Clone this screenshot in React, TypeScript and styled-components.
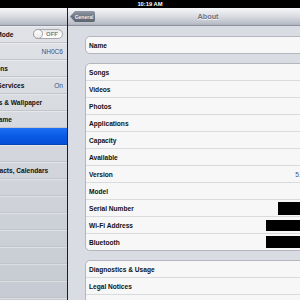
import * as React from 'react'
import styled, { createGlobalStyle } from 'styled-components'

const GlobalStyle = createGlobalStyle`
  html, body {
    margin: 0;
    padding: 0;
    background: #000;
  }
  body {
    font-family: "Liberation Sans", Arial, Helvetica, sans-serif;
  }
`

const Screen = styled.div`
  width: 300px;
  height: 300px;
  overflow: hidden;
  display: flex;
  flex-direction: column;
  background: #d9dce2;
`

const StatusBar = styled.div`
  flex: none;
  height: 8px;
  background: #000;
  color: #fff;
  font-size: 5.8px;
  font-weight: 700;
  line-height: 8px;
  text-align: center;
`

const Split = styled.div`
  flex: 1;
  min-height: 0;
  display: flex;
`

const Master = styled.div`
  flex: none;
  width: 67px;
  overflow: hidden;
  border-right: 1px solid #1e1f23;
  background: linear-gradient(#e2e4e8, #d3d6dc 50%, #c6cad2);
`

// the pane is wider than what shows: only its right edge is on screen
const MasterInner = styled.div`
  width: 217px;
  margin-left: -150px;
`

const Bar = styled.div`
  height: 17px;
  border-bottom: 1px solid #8d919d;
  background: linear-gradient(#f6f7f9, #dcdee3 45%, #bfc3cc 85%, #b0b4bf);
  display: grid;
  grid-template-columns: 1fr auto 1fr;
  align-items: center;
`

const BarTitle = styled.div`
  grid-column: 2;
  font-size: 7.3px;
  font-weight: 700;
  color: #6c7280;
  text-shadow: 0 1px 0 rgba(255, 255, 255, 0.8);
`

const BackButton = styled.div`
  grid-column: 1;
  justify-self: start;
  margin-left: 2px;
  width: 25px;
  height: 11px;
  box-sizing: border-box;
  padding: 0 2px 0 5px;
  display: flex;
  align-items: center;
  justify-content: center;
  font-size: 5px;
  font-weight: 700;
  color: #fff;
  text-shadow: 0 -0.5px 0 rgba(0, 0, 0, 0.5);
  background: linear-gradient(#9399a5, #6b7280 55%, #5d6472);
  border-radius: 2px;
  clip-path: polygon(0 50%, 5px 0, 100% 0, 100% 100%, 5px 100%);
`

const MasterRow = styled.div<{ selected?: boolean }>`
  height: 16px;
  border-bottom: 1px solid ${(p) => (p.selected ? '#0646b8' : '#c2c5cc')};
  box-shadow: inset 0 1px 0 rgba(255, 255, 255, ${(p) => (p.selected ? 0 : 0.35)});
  padding: 0 4px 0 118px;
  display: flex;
  align-items: center;
  justify-content: space-between;
  white-space: nowrap;
  font-size: 6.6px;
  font-weight: 700;
  color: ${(p) => (p.selected ? '#fff' : '#111')};
  background: ${(p) => (p.selected ? 'linear-gradient(#1d6ff2, #0a5ae6 50%, #0750d6)' : 'transparent')};
`

const MasterValue = styled.span`
  font-weight: 400;
  color: #385487;
`

const Switch = styled.div`
  position: relative;
  width: 30px;
  height: 10px;
  box-sizing: border-box;
  border: 1px solid #a6a8ae;
  border-radius: 5px;
  background: linear-gradient(#e6e6e6, #fdfdfd 60%);
  display: flex;
  align-items: center;
  justify-content: flex-end;
  padding-right: 4px;
  font-size: 6px;
  font-weight: 700;
  color: #7d7d7d;
`

const Knob = styled.div`
  position: absolute;
  left: -1px;
  top: -1px;
  width: 10px;
  height: 10px;
  box-sizing: border-box;
  border-radius: 50%;
  border: 1px solid #a3a5ab;
  background: linear-gradient(#ffffff, #e9e9e9);
`

const Detail = styled.div`
  flex: 1;
  min-width: 0;
  overflow: hidden;
`

const DetailInner = styled.div`
  width: 280px;
`

const DetailBody = styled.div`
  padding-top: 10px;
  display: flex;
  flex-direction: column;
  gap: 9px;
`

const Group = styled.div`
  margin: 0 28px 0 17px;
  border: 1px solid #b3b6bd;
  border-radius: 5px;
  background: #f7f7f7;
  overflow: hidden;
`

const Row = styled.div`
  height: 16px;
  padding: 0 9px 0 3px;
  display: flex;
  align-items: center;
  justify-content: space-between;
  border-top: 1px solid #d9dadd;
  font-size: 6.6px;
  &:first-child {
    border-top: none;
  }
`

const Label = styled.span`
  font-weight: 700;
  color: #111;
`

const Value = styled.span`
  color: #385487;
`

const Redact = styled.span<{ w: number; h: number }>`
  width: ${(p) => p.w}px;
  height: ${(p) => p.h}px;
  background: #000;
`

type MasterItem = { label: string; value?: string; toggle?: boolean; selected?: boolean }

const masterItems: MasterItem[] = [
  { label: 'Airplane Mode', toggle: true },
  { label: 'Wi-Fi', value: 'NH0C6' },
  { label: 'Notifications' },
  { label: 'Location Services', value: 'On' },
  { label: 'Brightness & Wallpaper' },
  { label: 'Picture Frame' },
  { label: 'General', selected: true },
  { label: 'iCloud' },
  { label: 'Mail, Contacts, Calendars' },
  { label: 'Twitter' },
  { label: 'FaceTime' },
  { label: 'Safari' },
  { label: 'Messages' },
  { label: 'Music' },
  { label: 'Video' },
  { label: 'Photos' },
  { label: 'Notes' }
]

type AboutItem = { label: string; value?: string; redact?: [number, number] }

const groups: AboutItem[][] = [
  [{ label: 'Name' }],
  [
    { label: 'Songs' },
    { label: 'Videos' },
    { label: 'Photos' },
    { label: 'Applications' },
    { label: 'Capacity' },
    { label: 'Available' },
    { label: 'Version', value: '5.1.1 (9B206)' },
    { label: 'Model' },
    { label: 'Serial Number', redact: [32, 13] },
    { label: 'Wi-Fi Address', redact: [44, 11] },
    { label: 'Bluetooth', redact: [44, 12] }
  ],
  [{ label: 'Diagnostics & Usage' }, { label: 'Legal Notices' }, { label: 'Regulatory' }]
]

export default function App() {
  return (
    <>
      <GlobalStyle />
      <Screen>
        <StatusBar>10:19 AM</StatusBar>
        <Split>
          <Master>
            <MasterInner>
              <Bar>
                <BarTitle>Settings</BarTitle>
              </Bar>
              {masterItems.map((item) => (
                <MasterRow key={item.label} selected={item.selected}>
                  <span>{item.label}</span>
                  {item.value && <MasterValue>{item.value}</MasterValue>}
                  {item.toggle && (
                    <Switch>
                      <Knob />
                      OFF
                    </Switch>
                  )}
                </MasterRow>
              ))}
            </MasterInner>
          </Master>
          <Detail>
            <DetailInner>
              <Bar>
                <BackButton>General</BackButton>
                <BarTitle>About</BarTitle>
              </Bar>
              <DetailBody>
                {groups.map((group, i) => (
                  <Group key={i}>
                    {group.map((item) => (
                      <Row key={item.label}>
                        <Label>{item.label}</Label>
                        {item.value && <Value>{item.value.split(' ')[0]}</Value>}
                        {item.redact && <Redact w={item.redact[0]} h={item.redact[1]} />}
                      </Row>
                    ))}
                  </Group>
                ))}
              </DetailBody>
            </DetailInner>
          </Detail>
        </Split>
      </Screen>
    </>
  )
}
